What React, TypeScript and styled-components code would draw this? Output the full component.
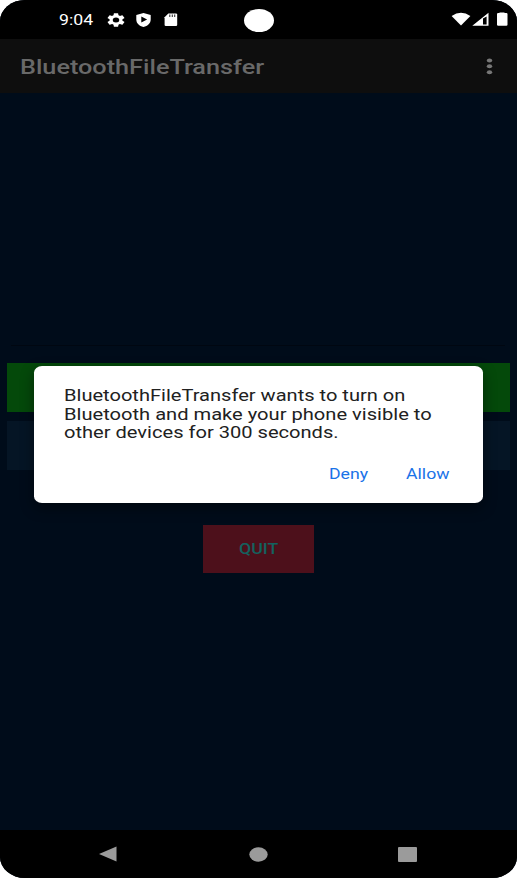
import React from "react";
import styled, { createGlobalStyle } from "styled-components";

const GlobalStyle = createGlobalStyle`
  * { box-sizing: border-box; }
  body { margin: 0; background: #fff; font-family: Roboto, sans-serif; }
`;

const Phone = styled.div`
  position: relative;
  width: 517px;
  height: 878px;
  display: flex;
  flex-direction: column;
  overflow: hidden;
  background: #000c1a;
  border-radius: 25px / 21px;
`;

const StatusBar = styled.header`
  height: 39px;
  flex: none;
  display: grid;
  grid-template-columns: 1fr 30px 1fr;
  background: #000;
`;

const StatusLeft = styled.div`
  display: flex;
  align-items: center;
  height: 39px;
  padding-left: 59px;
`;

const Clock = styled.div`
  width: 48px;
  height: 18px;
`;

const StatusIcons = styled.div`
  display: flex;
  gap: 11px;
`;

const StatusRight = styled.div`
  display: flex;
  justify-content: flex-end;
  height: 39px;
  padding: 12px 9px 0 0;
`;

const Camera = styled.div`
  width: 30px;
  height: 23px;
  margin-top: 9px;
  border-radius: 50%;
  background: #fff;
`;

const Wide = styled.span<{ $size: number; $line: number; $stretch: number; $weight?: number; $color: string }>`
  display: block;
  width: max-content;
  font-size: ${(p) => p.$size}px;
  line-height: ${(p) => p.$line}px;
  font-weight: ${(p) => p.$weight ?? 400};
  color: ${(p) => p.$color};
  white-space: nowrap;
  transform: scaleX(${(p) => p.$stretch});
  transform-origin: left center;
`;

const AppBar = styled.div`
  height: 54px;
  flex: none;
  display: flex;
  align-items: center;
  justify-content: space-between;
  padding: 1px 24px 0 20px;
  background: #0e0e0e;
`;

const Content = styled.main`
  flex: 1;
  display: flex;
  flex-direction: column;
  padding: 252px 7px 0;
`;

const Divider = styled.div`
  height: 1px;
  margin: 0 5px 17px 4px;
  background: #000711;
`;

const WideButton = styled.div<{ $bg: string }>`
  height: 49px;
  margin-bottom: 9px;
  background: ${(p) => p.$bg};
`;

const QuitButton = styled.button`
  width: 111px;
  height: 48px;
  margin: 46px 0 0 196px;
  padding: 0 0 0 36px;
  border: 0;
  font-family: inherit;
  text-align: left;
  background: #4d101b;
`;

const NavBar = styled.nav`
  height: 48px;
  flex: none;
  display: flex;
  align-items: center;
  justify-content: space-between;
  padding: 0 100px 0 98px;
  background: #000;
`;

const Dialog = styled.section`
  position: absolute;
  left: 34px;
  top: 366px;
  width: 449px;
  height: 137px;
  padding: 21px 0 0 30px;
  border-radius: 8px / 6.5px;
  background: #fff;
  box-shadow: 0 5px 14px rgba(0, 0, 0, 0.45);
`;

const Actions = styled.div`
  display: flex;
  padding: 22px 0 0 264.5px;
`;

const Action = styled.button`
  width: 78.5px;
  padding: 0;
  border: 0;
  background: none;
  font-family: inherit;
  text-align: left;
`;

const message = [
  { text: "BluetoothFileTransfer wants to turn on", stretch: 1.254 },
  { text: "Bluetooth and make your phone visible to", stretch: 1.257 },
  { text: "other devices for 300 seconds.", stretch: 1.255 },
];

const Gear = () => (
  <svg width="18" height="14" viewBox="2 2 20 20" preserveAspectRatio="none" fill="#fff">
    <path d="M19.14 12.94c.04-.3.06-.61.06-.94 0-.32-.02-.64-.07-.94l2.03-1.58a.49.49 0 0 0 .12-.61l-1.92-3.32a.49.49 0 0 0-.59-.22l-2.39.96c-.5-.38-1.03-.7-1.62-.94l-.36-2.54a.48.48 0 0 0-.48-.41h-3.84c-.24 0-.43.17-.47.41l-.36 2.54c-.59.24-1.13.57-1.62.94l-2.39-.96a.48.48 0 0 0-.59.22L2.74 8.87c-.12.21-.08.47.12.61l2.03 1.58c-.05.3-.09.63-.09.94s.02.64.07.94l-2.03 1.58a.49.49 0 0 0-.12.61l1.92 3.32c.12.22.37.29.59.22l2.39-.96c.5.38 1.03.7 1.62.94l.36 2.54c.05.24.24.41.48.41h3.84c.24 0 .44-.17.47-.41l.36-2.54c.59-.24 1.13-.56 1.62-.94l2.39.96c.22.08.47 0 .59-.22l1.92-3.32a.49.49 0 0 0-.12-.61zM12 15.6a3.6 3.6 0 1 1 0-7.2 3.6 3.6 0 0 1 0 7.2z" />
  </svg>
);

const Shield = () => (
  <svg width="15" height="14" viewBox="0 0 15 14" fill="#fff">
    <path fillRule="evenodd" d="M7.500 0 14.700 2v4.500c0 3.800-3 6.500-7.200 7.500C3.300 13 .3 10.300 .3 6.500V2zM5.300 3.600v6l5.800-3z" />
  </svg>
);

const SdCard = () => (
  <svg width="16" height="14" viewBox="-2 0 16 14">
    <path fill="#fff" d="M4.300.500H12q1.200 0 1.200 1v10.600q0 1-1.200 1H1.800q-1.200 0-1.200-1V4.200z" />
    <path stroke="#333" strokeWidth="1.100" d="M5.800 1.600v2.300M8.300 1.600v2.300M10.700 1.600v2.300" />
  </svg>
);

const Signals = () => (
  <svg width="57" height="15" viewBox="0 0 57 15" fill="#fff">
    <path d="M.6 4Q10 -2.600 19.400 4L10 13.400z" />
    <path fillRule="evenodd" d="M21.300 13.800 37.500 .8v13zM32 6.500v5.900h3.600V4.500z" />
    <path d="M48.500 1V.4h5V1h1.800q1.200 0 1.200 1v10.700q0 1-1.200 1h-8.100q-1.200 0-1.200-1V2q0-1 1.200-1z" />
  </svg>
);

const Dots = () => (
  <svg width="7" height="18" viewBox="0 0 7 18" fill="#777">
    <ellipse cx="3.500" cy="2.400" rx="2.700" ry="2" />
    <ellipse cx="3.500" cy="8.300" rx="2.700" ry="2" />
    <ellipse cx="3.500" cy="14.300" rx="2.700" ry="2" />
  </svg>
);

export default function App() {
  return (
    <>
      <GlobalStyle />
      <Phone>
        <StatusBar>
          <StatusLeft>
            <Clock>
              <Wide $size={15} $line={18} $stretch={1.18} $color="#fff">9:04</Wide>
            </Clock>
            <StatusIcons>
              <Gear />
              <Shield />
              <SdCard />
            </StatusIcons>
          </StatusLeft>
          <Camera />
          <StatusRight>
            <Signals />
          </StatusRight>
        </StatusBar>
        <AppBar>
          <Wide $size={20} $line={24} $stretch={1.262} $weight={500} $color="#696969">BluetoothFileTransfer</Wide>
          <Dots />
        </AppBar>
        <Content>
          <Divider />
          <WideButton $bg="#04490a" />
          <WideButton $bg="#051525" />
          <QuitButton>
            <Wide $size={14} $line={18} $stretch={1.26} $weight={500} $color="#13625f">QUIT</Wide>
          </QuitButton>
        </Content>
        <NavBar>
          <svg width="20" height="16" viewBox="0 0 20 16">
            <path d="M1 8 18.500 .5v15z" fill="#9b9b9b" />
          </svg>
          <svg width="19" height="15" viewBox="0 0 19 15">
            <ellipse cx="9.500" cy="7.500" rx="9.200" ry="7.200" fill="#9b9b9b" />
          </svg>
          <svg width="19" height="15" viewBox="0 0 19 15">
            <rect width="19" height="15" rx="1" fill="#9b9b9b" />
          </svg>
        </NavBar>
        <Dialog>
          {message.map((line) => (
            <Wide key={line.text} $size={16} $line={18.5} $stretch={line.stretch} $color="#212121">{line.text}</Wide>
          ))}
          <Actions>
            <Action>
              <Wide $size={15} $line={18} $stretch={1.18} $color="#1a73e8">Deny</Wide>
            </Action>
            <Action>
              <Wide $size={15} $line={18} $stretch={1.18} $color="#1a73e8">Allow</Wide>
            </Action>
          </Actions>
        </Dialog>
      </Phone>
    </>
  );
}
